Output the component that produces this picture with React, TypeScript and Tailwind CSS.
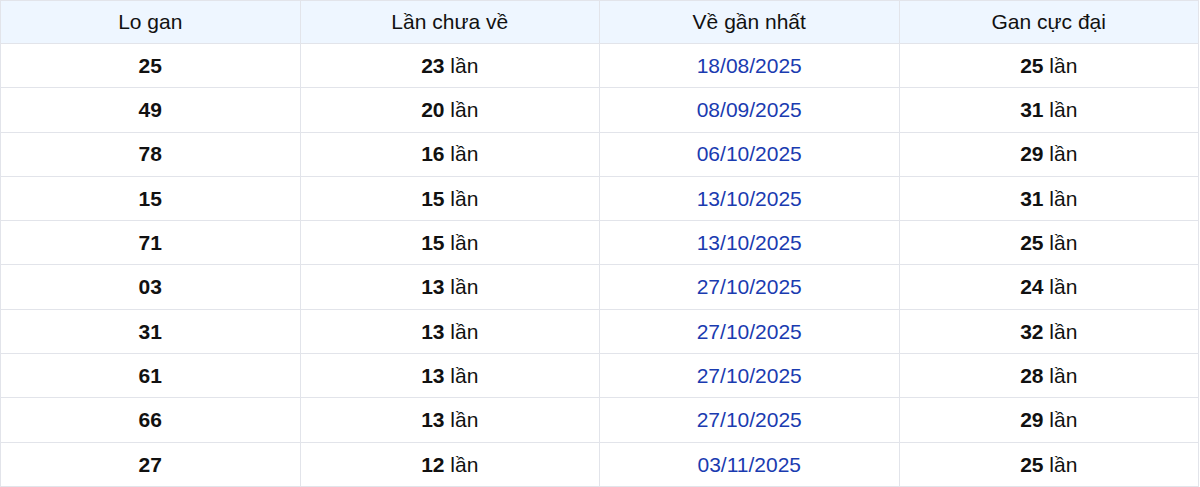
import React from 'react';

type Row = { lo: string; count: number; last: string; max: number };

const rows: Row[] = [
  { lo: '25', count: 23, last: '18/08/2025', max: 25 },
  { lo: '49', count: 20, last: '08/09/2025', max: 31 },
  { lo: '78', count: 16, last: '06/10/2025', max: 29 },
  { lo: '15', count: 15, last: '13/10/2025', max: 31 },
  { lo: '71', count: 15, last: '13/10/2025', max: 25 },
  { lo: '03', count: 13, last: '27/10/2025', max: 24 },
  { lo: '31', count: 13, last: '27/10/2025', max: 32 },
  { lo: '61', count: 13, last: '27/10/2025', max: 28 },
  { lo: '66', count: 13, last: '27/10/2025', max: 29 },
  { lo: '27', count: 12, last: '03/11/2025', max: 25 },
];

const headers = ['Lo gan', 'Lần chưa về', 'Về gần nhất', 'Gan cực đại'];

export default function App() {
  return (
    <div className="w-[1199px] font-['Liberation_Sans',_Arial,_sans-serif] text-[21px] text-[#111]">
      <table className="w-full table-fixed border-collapse">
        <thead>
          <tr className="bg-[#eef6ff]">
            {headers.map((h) => (
              <th key={h} className="h-[43px] border border-[#e2e4ea] font-normal">
                {h}
              </th>
            ))}
          </tr>
        </thead>
        <tbody>
          {rows.map((r, i) => (
            <tr key={i} className="bg-white">
              <td className="h-[44.3px] border border-[#e2e4ea] text-center font-bold">{r.lo}</td>
              <td className="border border-[#e2e4ea] text-center">
                <b>{r.count}</b> lần
              </td>
              <td className="border border-[#e2e4ea] text-center text-[#1a3bb0]">{r.last}</td>
              <td className="border border-[#e2e4ea] text-center">
                <b>{r.max}</b> lần
              </td>
            </tr>
          ))}
        </tbody>
      </table>
    </div>
  );
}
